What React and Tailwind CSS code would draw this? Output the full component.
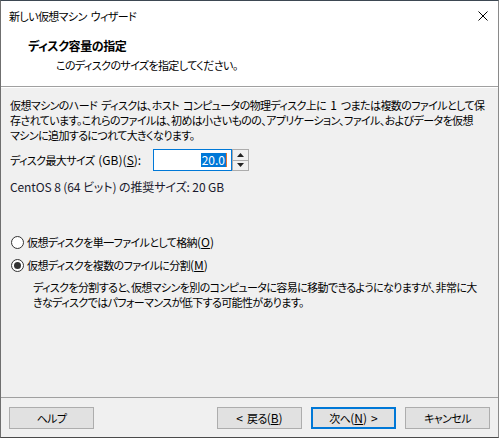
import React from "react";

const font = {
  fontFamily: '"Noto Sans CJK JP", "Noto Sans", sans-serif',
};

// Latin runs are a touch wider in the original UI font
const L = ({ children }) => (
  <span className="text-[12px] tracking-normal">{children}</span>
);
const Sp = () => <span className="inline-block w-[4px]" />;
const U = ({ children }) => <span className="underline">{children}</span>;

const Radio = ({ checked }) => (
  <span className="flex h-[13px] w-[13px] items-center justify-center rounded-full border border-[#333333] bg-white">
    {checked && <span className="h-[7px] w-[7px] rounded-full bg-[#333333]" />}
  </span>
);

const Button = ({ children, primary }) => (
  <button
    className={
      primary
        ? "flex h-[22px] w-[85px] items-center justify-center border-2 border-[#0078d7] bg-[#e1e1e1] text-black"
        : "flex h-[22px] w-[85px] items-center justify-center border border-[#adadad] bg-[#e1e1e1] text-black"
    }
  >
    {children}
  </button>
);

const App = () => {
  return (
    <div
      className="flex h-[438px] w-[499px] flex-col border border-t-[#3d4852] border-b-[#4a4a4a] border-l-[#6f6f6f] border-r-[#8a8a8a] bg-[#f0f0f0] text-[11px] tracking-[-0.6px] text-black [font-feature-settings:'palt']"
      style={font}
    >
      {/* title bar */}
      <div className="flex h-[30px] shrink-0 items-center justify-between bg-white pl-2 pr-[10px]">
        <span>
          新しい仮想マシン<Sp />ウィザード
        </span>
        <svg width="10" height="10" viewBox="0 0 10 10">
          <path d="M0.5 0.5L9.5 9.5M9.5 0.5L0.5 9.5" stroke="#000" strokeWidth="1" />
        </svg>
      </div>

      {/* header */}
      <div className="flex h-[56px] shrink-0 flex-col border-b border-[#a0a0a0] bg-white pl-[27px] pt-[6px]">
        <div className="h-[18px] text-[12px] font-bold leading-[18px] tracking-[-0.4px]">
          ディスク容量の指定
        </div>
        <div className="ml-[28px] mt-px leading-[18px]">
          このディスクのサイズを指定してください。
        </div>
      </div>

      {/* body */}
      <div className="flex flex-1 flex-col border-t border-white pl-[9px]">
        <p className="mt-[9px] whitespace-nowrap leading-[15px]">
          仮想マシンのハード<Sp />ディスクは、ホスト<Sp />コンピュータの物理ディスク上に<Sp />
          <L>1</L>
          <Sp />
          つまたは複数のファイルとして保
          <br />
          存されています。これらのファイルは、初めは小さいものの、アプリケーション、ファイル、およびデータを仮想
          <br />
          マシンに追加するにつれて大きくなります。
        </p>

        <div className="mt-[6px] flex h-[22px] items-center">
          <span className="w-[143px] whitespace-nowrap">
            ディスク最大サイズ<Sp />
            <L>
              (GB)(<U>S</U>):
            </L>
          </span>
          <div className="flex h-[22px] w-[79px] items-center justify-end border border-[#0078d7] bg-white pr-[4px] text-[12px] tracking-normal">
            <span className="bg-[#0078d7] px-px leading-[14px] text-white">20.0</span>
            <span className="h-[14px] w-px bg-[#e8742c]" />
          </div>
          <div className="flex h-[22px] w-[17px] flex-col border border-[#acacac] bg-[#f0f0f0]">
            <div className="flex flex-1 items-center justify-center border-b border-[#acacac]">
              <svg width="7" height="4" viewBox="0 0 7 4">
                <path d="M3.5 0L7 4H0Z" fill="#222" />
              </svg>
            </div>
            <div className="flex flex-1 items-center justify-center">
              <svg width="7" height="4" viewBox="0 0 7 4">
                <path d="M0 0H7L3.5 4Z" fill="#222" />
              </svg>
            </div>
          </div>
        </div>

        <div className="mt-[8px] text-[12px] leading-[15px] tracking-[-0.1px] text-[#1a1a2e]">
          CentOS 8 (64 ビット) の推奨サイズ: 20 GB
        </div>

        <div className="mt-[38px] flex h-[20px] items-center gap-[3px] pl-[1px]">
          <Radio />
          <span>
            仮想ディスクを単一ファイルとして格納
            <L>
              (<U>O</U>)
            </L>
          </span>
        </div>
        <div className="mt-[3px] flex h-[20px] items-center gap-[3px] pl-[1px]">
          <Radio checked />
          <span>
            仮想ディスクを複数のファイルに分割
            <L>
              (<U>M</U>)
            </L>
          </span>
        </div>
        <p className="ml-[23px] mt-[5px] whitespace-nowrap leading-[15px]">
          ディスクを分割すると、仮想マシンを別のコンピュータに容易に移動できるようになりますが、非常に大
          <br />
          きなディスクではパフォーマンスが低下する可能性があります。
        </p>
      </div>

      {/* footer */}
      <div className="h-[40px] shrink-0 border-t border-[#a0a0a0]">
        <div className="mt-[9px] flex items-start justify-between px-[8px]">
          <Button>ヘルプ</Button>
          <div className="flex gap-[9px]">
            <Button>
              <L>&lt;</L>
              <Sp />
              戻る
              <L>
                (<U>B</U>)
              </L>
            </Button>
            <Button primary>
              次へ
              <L>
                (<U>N</U>)
              </L>
              <Sp />
              <L>&gt;</L>
            </Button>
            <Button>キャンセル</Button>
          </div>
        </div>
      </div>
    </div>
  );
};

export default App;
